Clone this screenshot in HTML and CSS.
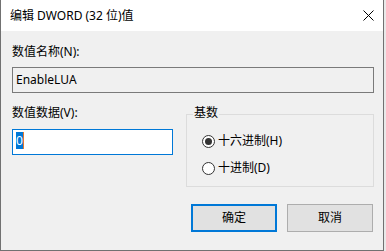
FILE: index.html
```html
<!DOCTYPE html>
<html lang="zh-CN">
<head>
<meta charset="utf-8">
<title>编辑 DWORD (32 位)值</title>
<link rel="stylesheet" href="styles.css">
</head>
<body>
<div class="window">
  <div class="titlebar">
    <span class="title">编辑 DWORD (32 位)值</span>
    <span class="close">
      <svg width="11" height="11" viewBox="0 0 11 11"><path d="M0.5 0.5 L10.5 10.5 M10.5 0.5 L0.5 10.5" stroke="#000" stroke-width="1" fill="none"/></svg>
    </span>
  </div>
  <div class="content">
    <div class="label">数值名称(N):</div>
    <div class="field readonly">EnableLUA</div>
    <div class="row">
      <div class="col">
        <div class="label">数值数据(V):</div>
        <div class="field focus"><span class="sel">0</span><span class="caret"></span></div>
      </div>
      <fieldset class="group">
        <legend>基数</legend>
        <div class="radio-row first"><span class="radio checked"></span><span>十六进制(H)</span></div>
        <div class="radio-row"><span class="radio"></span><span>十进制(D)</span></div>
      </fieldset>
    </div>
    <div class="buttons">
      <button class="btn default">确定</button>
      <button class="btn">取消</button>
    </div>
  </div>
</div>
</body>
</html>
```
FILE: styles.css
```css
html, body {
  margin: 0;
  padding: 0;
}
body {
  width: 386px;
  height: 251px;
  overflow: hidden;
  background: #e9e9e9;
  font-family: "Noto Sans", "Noto Sans CJK SC", sans-serif;
  font-size: 12px;
  color: #000;
}
.window {
  box-sizing: border-box;
  width: 384px;
  height: 251px;
  background: #f0f0f0;
  border-left: 1px solid #717171;
  border-right: 1px solid #717171;
  border-bottom: 1px solid #717171;
  display: flex;
  flex-direction: column;
}
.titlebar {
  height: 31px;
  flex: none;
  background: #fff;
  display: flex;
  align-items: center;
  padding-left: 9px;
}
.title {
  line-height: 16px;
}
.close {
  margin-left: auto;
  width: 30px;
  height: 31px;
  display: flex;
  align-items: center;
  justify-content: center;
}
.close svg {
  display: block;
}
.content {
  padding: 13px 9px 0 11px;
  display: flex;
  flex-direction: column;
}
.label {
  line-height: 16px;
  height: 16px;
}
.field {
  box-sizing: border-box;
  height: 26px;
  border: 1px solid #7a7a7a;
  margin-top: 7px;
}
.field.readonly {
  background: #f0f0f0;
  line-height: 24px;
  padding-left: 3px;
}
.field.focus {
  background: #fff;
  border-color: #0078d7;
  margin-top: 8px;
  padding: 2px 0 0 3px;
  display: flex;
  align-items: flex-start;
}
.sel {
  background: #0078d7;
  color: #fff;
  height: 17px;
  line-height: 17px;
}
.caret {
  width: 1px;
  height: 17px;
  background: #e5782c;
}
.row {
  margin-top: 12px;
  display: grid;
  grid-template-columns: 161px 1fr;
  column-gap: 13px;
}
.group {
  margin: 0;
  padding: 0 0 10px 6px;
  border: 1px solid #dcdcdc;
  min-width: 0;
}
.group legend {
  padding: 0 1px 2px 1px;
  line-height: 16px;
}
.radio-row {
  display: flex;
  align-items: center;
  height: 16px;
  line-height: 16px;
  margin-top: 11px;
}
.radio-row.first {
  margin-top: 10px;
}
.radio {
  box-sizing: border-box;
  width: 13px;
  height: 13px;
  border: 1px solid #333;
  border-radius: 50%;
  background: #fff;
  margin-left: 9px;
  margin-right: 3px;
  display: flex;
  align-items: center;
  justify-content: center;
}
.radio.checked::after {
  content: "";
  width: 7px;
  height: 7px;
  border-radius: 50%;
  background: #333;
}
.buttons {
  margin-top: 17px;
  display: flex;
  justify-content: flex-end;
  gap: 10px;
  padding-right: 1px;
}
.btn {
  box-sizing: border-box;
  width: 86px;
  height: 28px;
  margin: 0;
  padding: 0;
  background: #e1e1e1;
  border: 1px solid #adadad;
  font-family: inherit;
  font-size: 12px;
  color: #000;
  line-height: 16px;
}
.btn.default {
  border: 2px solid #0078d7;
}
```
